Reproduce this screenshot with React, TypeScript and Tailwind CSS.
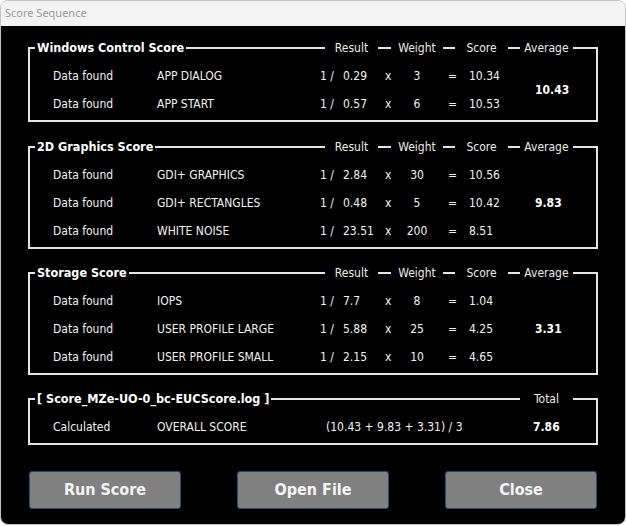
import React from "react";

type Row = { status: string; name: string; result: string; weight: string; score: string };

type Group = { title: string; rows: Row[]; average: string; mt: string };

const groups: Group[] = [
  {
    title: "Windows Control Score",
    mt: "mt-0",
    average: "10.43",
    rows: [
      { status: "Data found", name: "APP DIALOG", result: "0.29", weight: "3", score: "10.34" },
      { status: "Data found", name: "APP START", result: "0.57", weight: "6", score: "10.53" },
    ],
  },
  {
    title: "2D Graphics Score",
    mt: "mt-[24px]",
    average: "9.83",
    rows: [
      { status: "Data found", name: "GDI+ GRAPHICS", result: "2.84", weight: "30", score: "10.56" },
      { status: "Data found", name: "GDI+ RECTANGLES", result: "0.48", weight: "5", score: "10.42" },
      { status: "Data found", name: "WHITE NOISE", result: "23.51", weight: "200", score: "8.51" },
    ],
  },
  {
    title: "Storage Score",
    mt: "mt-[23px]",
    average: "3.31",
    rows: [
      { status: "Data found", name: "IOPS", result: "7.7", weight: "8", score: "1.04" },
      { status: "Data found", name: "USER PROFILE LARGE", result: "5.88", weight: "25", score: "4.25" },
      { status: "Data found", name: "USER PROFILE SMALL", result: "2.15", weight: "10", score: "4.65" },
    ],
  },
];

function Seg({ w }: { w: string }) {
  return <div className={`h-full shrink-0 bg-[#e4e4e4] ${w}`} />;
}

function Label({ text, w }: { text: string; w: string }) {
  return (
    <span className={`shrink-0 text-center text-[12px] leading-[14px] text-[#ececec] whitespace-nowrap ${w}`}>
      {text}
    </span>
  );
}

function Header({ title, total }: { title: string; total?: boolean }) {
  return (
    <div className="flex h-[2px] items-center">
      <Seg w="w-[5px]" />
      <span className="shrink-0 px-[2px] text-[12.5px] font-bold leading-[14px] text-white whitespace-nowrap">
        {title}
      </span>
      <div className="h-full flex-1 bg-[#e4e4e4]" />
      {total ? (
        <>
          <Label text="Total" w="w-[53px]" />
          <Seg w="w-[23px]" />
        </>
      ) : (
        <>
          <Label text="Result" w="w-[53px]" />
          <Seg w="w-[13px]" />
          <Label text="Weight" w="w-[52px]" />
          <Seg w="w-[12px]" />
          <Label text="Score" w="w-[53px]" />
          <Seg w="w-[12px]" />
          <Label text="Average" w="w-[53px]" />
          <Seg w="w-[23px]" />
        </>
      )}
    </div>
  );
}

function ScoreGroup({ g }: { g: Group }) {
  return (
    <div className={`border-x-2 border-b-2 border-[#e4e4e4] ${g.mt}`}>
      <Header title={g.title} />
      <div className="flex pt-[12px] pb-[3px] text-[12px] text-[#f2f2f2]">
        <div className="flex flex-col">
          {g.rows.map((r) => (
            <div key={r.name} className="flex h-[28px] items-center whitespace-nowrap pl-[23px] pt-[1px]">
              <span className="w-[104px]">{r.status}</span>
              <span className="w-[163px]">{r.name}</span>
              <span className="w-[23px]">1 /</span>
              <span className="w-[42px]">{r.result}</span>
              <span className="w-[15px]">x</span>
              <span className="w-[34px] text-center">{r.weight}</span>
              <span className="w-[14px]" />
              <span className="w-[21px]">=</span>
              <span className="w-[66px]">{r.score}</span>
            </div>
          ))}
        </div>
        <div className="flex w-[61px] items-center pt-[1px] font-bold text-white">{g.average}</div>
      </div>
    </div>
  );
}

function Btn({ text }: { text: string }) {
  return (
    <button className="flex h-[38px] w-[152px] items-center justify-center rounded-[3px] border border-[#1d4e86] bg-[#808080] text-[16px] font-bold text-[#f4f4f4]">
      {text}
    </button>
  );
}

export default function App() {
  return (
    <div className="h-[526px] w-[626px] bg-white font-['DejaVu_Sans_Condensed','DejaVu_Sans',sans-serif]">
      <div className="flex h-[525px] w-[626px] flex-col overflow-hidden rounded-[8px] border border-[#c2c2c2]">
        <div className="flex h-[25px] shrink-0 items-center bg-[#f3f3f3] pl-[4px] font-['Noto_Sans',sans-serif] text-[11px] text-[#9a9a9a]">
          Score Sequence
        </div>
        <div className="flex flex-1 flex-col bg-black px-[27px] pt-[21px]">
          {groups.map((g) => (
            <ScoreGroup key={g.title} g={g} />
          ))}
          <div className="mt-[23px] border-x-2 border-b-2 border-[#e4e4e4]">
            <Header title="[ Score_MZe-UO-0_bc-EUCScore.log ]" total />
            <div className="flex pt-[12px] pb-[3px] text-[12px] text-[#f2f2f2]">
              <div className="flex h-[28px] items-center whitespace-nowrap pl-[23px] pt-[1px]">
                <span className="w-[104px]">Calculated</span>
                <span className="w-[163px]">OVERALL SCORE</span>
                <span className="w-[213px] pl-[6px]">(10.43 + 9.83 + 3.31) / 3</span>
              </div>
              <div className="flex w-[63px] items-center pt-[1px] font-bold text-white">7.86</div>
            </div>
          </div>
          <div className="mt-[26px] flex justify-between pl-[1px] pr-[1px]">
            <Btn text="Run Score" />
            <Btn text="Open File" />
            <Btn text="Close" />
          </div>
        </div>
      </div>
    </div>
  );
}
